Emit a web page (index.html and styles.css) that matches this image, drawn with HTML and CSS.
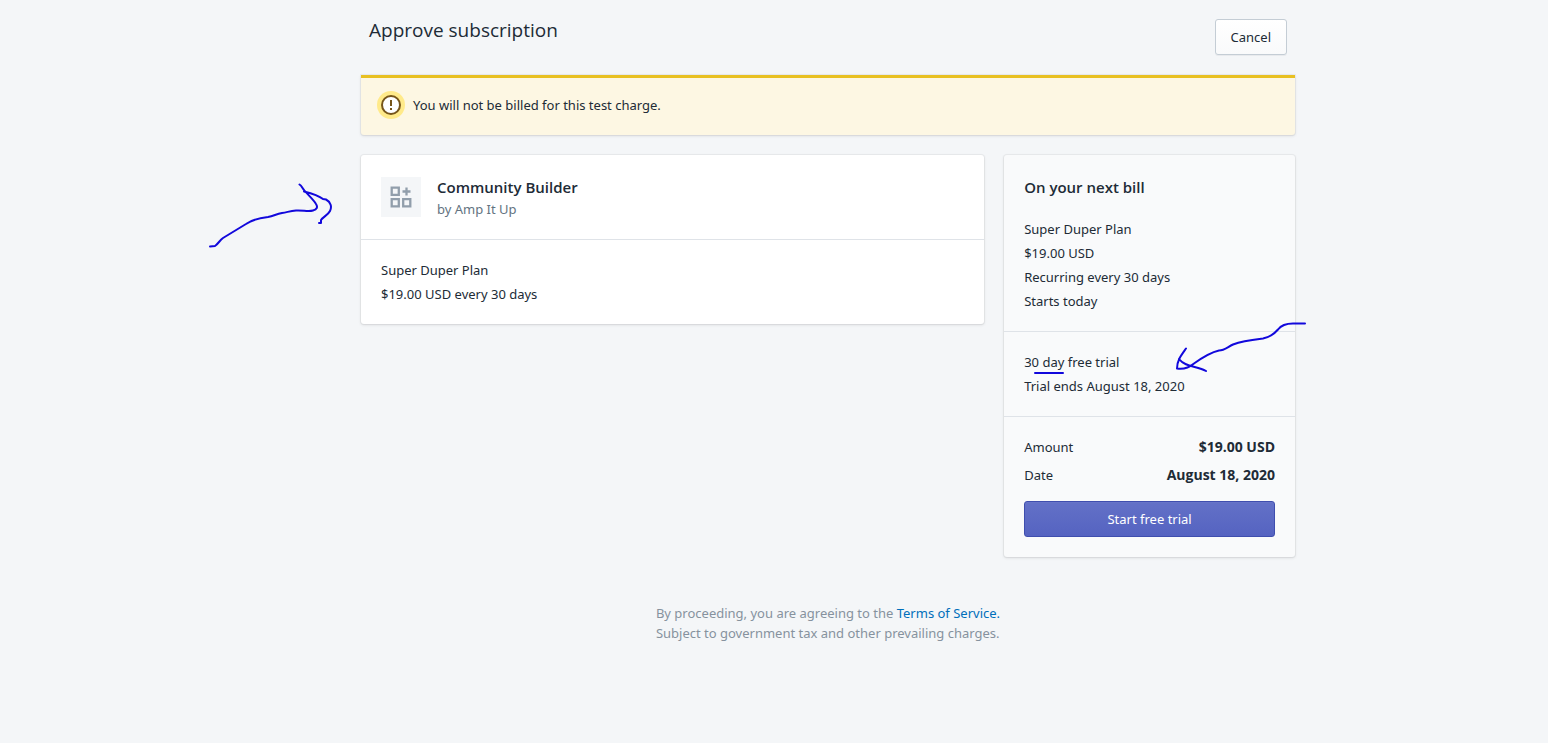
FILE: index.html
```html
<!DOCTYPE html>
<html lang="en">
<head>
<meta charset="utf-8">
<meta name="viewport" content="width=device-width, initial-scale=1">
<title>Approve subscription</title>
<link rel="stylesheet" href="styles.css">
</head>
<body>
<main class="page">
  <header class="page-header">
    <h1 class="page-title">Approve subscription</h1>
    <button class="button" type="button">Cancel</button>
  </header>

  <div class="banner" role="status">
    <svg class="banner-icon" viewBox="0 0 28 28" aria-hidden="true">
      <circle cx="14" cy="14" r="14" fill="#ffea8a"/>
      <circle cx="14" cy="14" r="9" fill="#fff" stroke="#76551a" stroke-width="2"/>
      <path d="M14 9v6M14 17v2" fill="none" stroke="#76551a" stroke-width="2"/>
    </svg>
    <p>You will not be billed for this test charge.</p>
  </div>

  <div class="columns">
    <section class="card">
      <div class="card-section app">
        <svg class="app-icon" viewBox="0 0 40 40" aria-hidden="true">
          <rect width="40" height="40" fill="#f4f6f8"/>
          <path d="M10.700 10.700h7.100v7.100h-7.100zM10.700 22.200h7.100v7.100h-7.100zM22.200 22.200h7.100v7.100h-7.100zM25.500 10.500v8M21.500 14.500h8" fill="none" stroke="#919eab" stroke-width="2.300"/>
        </svg>
        <div>
          <h2 class="heading">Community Builder</h2>
          <p class="author">by Amp It Up</p>
        </div>
      </div>
      <div class="card-section">
        <p>Super Duper Plan</p>
        <p>$19.00 USD every 30 days</p>
      </div>
      <svg class="note note-app" viewBox="0 0 128 68" aria-hidden="true">
        <path d="M4 64.500L9 64C12 62 14 58 17 56L40 42C47 37 54 36 62 35C68 34 70 32 76 31C82 30 84 29 90 28.500C97 28 102 30 107 28.500C111 27.500 112 25 110 22C107 17 102 13 98 8C96 6 96 4 93.500 2.500M98 9.500C104 11 112 13 117 17L120 17.500C125 20 126 25 124 29C122 33 117 35 115 38L115 41L113 41"/>
      </svg>
    </section>

    <section class="card card-subdued">
      <div class="card-section">
        <h2 class="heading bill-heading">On your next bill</h2>
        <p>Super Duper Plan</p>
        <p>$19.00 USD</p>
        <p>Recurring every 30 days</p>
        <p>Starts today</p>
      </div>
      <div class="card-section trial">
        <p>30 <span class="marked">day<svg class="note note-underline" viewBox="0 0 30 4" aria-hidden="true"><path d="M1 2h28"/></svg></span> free trial</p>
        <p>Trial ends August 18, 2020</p>
        <svg class="note note-trial" viewBox="0 0 134 52" aria-hidden="true">
          <path d="M132 3.500h-12c-8 0-12 2-15 6c-5 6-10 8-15 9c-9 1-20 2-30 6c-6 3-9 6-14 6c-9 2-18 8-25 13c-6 5-11 6-17 5c0-8 4-13 9-20M6 39c6 8 18 7 27 12"/>
        </svg>
      </div>
      <div class="card-section checkout">
        <dl class="totals">
          <dt>Amount</dt><dd>$19.00 USD</dd>
          <dt>Date</dt><dd>August 18, 2020</dd>
        </dl>
        <button class="button button-primary" type="button">Start free trial</button>
      </div>
    </section>
  </div>

  <footer class="footer">
    <div>
      <p>By proceeding, you are agreeing to the <a href="#terms">Terms of Service.</a></p>
      <p>Subject to government tax and other prevailing charges.</p>
    </div>
  </footer>
</main>
</body>
</html>
```
FILE: styles.css
```css
* {
  box-sizing: border-box;
}

body {
  margin: 0;
  padding-left: 108px;
  background: #f4f6f8;
  color: #212b36;
  font-family: "Noto Sans", "Open Sans", sans-serif;
  font-size: 13px;
  line-height: 24px;
}

h1, h2, p, dl, dd {
  margin: 0;
}

.page {
  max-width: 934px;
  margin: 0 auto;
}

.page-header {
  display: flex;
  justify-content: space-between;
  align-items: flex-start;
  padding: 16px 8px 20px;
}

.page-title {
  font-family: "Open Sans", "Noto Sans", sans-serif;
  font-size: 19px;
  font-weight: 400;
  line-height: 28px;
}

.button {
  height: 36px;
  margin-top: 3px;
  padding: 0 15px;
  border: 1px solid #c4cdd5;
  border-radius: 3px;
  background: linear-gradient(#fff, #f9fafb);
  box-shadow: 0 1px 0 rgba(22, 29, 37, 0.05);
  color: #212b36;
  font: inherit;
}

.button-primary {
  display: block;
  width: 100%;
  margin-top: 14px;
  border-color: #3f4eae;
  background: linear-gradient(#6371c7, #5563c1);
  box-shadow: inset 0 1px 0 #6774c8;
  color: #fff;
}

.banner {
  display: flex;
  align-items: flex-start;
  gap: 8px;
  padding: 13px 16px 16px;
  border-top: 3px solid #e8c021;
  border-radius: 0 0 3px 3px;
  background: #fdf7e3;
  box-shadow: 0 0 0 1px rgba(63, 63, 68, 0.05), 0 1px 3px rgba(63, 63, 68, 0.15);
}

.banner p {
  line-height: 28px;
}

.banner-icon {
  flex: none;
  width: 28px;
  height: 28px;
}

.columns {
  display: grid;
  grid-template-columns: 15fr 7fr;
  align-items: start;
  gap: 20px;
  margin-top: 20px;
}

.card {
  position: relative;
  border-radius: 3px;
  background: #fff;
  box-shadow: 0 0 0 1px rgba(63, 63, 68, 0.05), 0 1px 3px rgba(63, 63, 68, 0.15);
}

.card-subdued {
  background: #f9fafb;
}

.card-section {
  padding: 18px 20px;
}

.card-section + .card-section {
  border-top: 1px solid #dfe3e8;
}

.app {
  display: flex;
  gap: 16px;
  padding-top: 22px;
}

.app-icon {
  flex: none;
  width: 40px;
  height: 40px;
}

.heading {
  font-family: "Open Sans", "Noto Sans", sans-serif;
  font-size: 15px;
  font-weight: 600;
  line-height: 20px;
}

.bill-heading {
  padding: 4px 0 20px;
}

.author {
  color: #637381;
  line-height: 24px;
}

.trial {
  position: relative;
}

.checkout {
  padding-bottom: 20px;
}

.totals {
  display: grid;
  grid-template-columns: auto auto;
  row-gap: 4px;
}

.totals dd {
  font-family: "Open Sans", "Noto Sans", sans-serif;
  font-size: 14px;
  font-weight: 700;
  text-align: right;
}

.footer {
  display: flex;
  justify-content: center;
  padding: 46px 20px 20px;
  color: #86929e;
  line-height: 20px;
}

.footer a {
  color: #006fbb;
  text-decoration: none;
}

.note {
  position: absolute;
  fill: none;
  stroke: #1208dc;
  stroke-width: 2;
  stroke-linecap: round;
  stroke-linejoin: round;
  overflow: visible;
  pointer-events: none;
}

.note-app {
  top: 27px;
  left: -155px;
  width: 128px;
  height: 68px;
}

.marked {
  position: relative;
}

.note-underline {
  left: -8px;
  bottom: -4px;
  width: 30px;
  height: 4px;
}

.note-trial {
  top: -12px;
  right: -12px;
  width: 134px;
  height: 52px;
}
```
